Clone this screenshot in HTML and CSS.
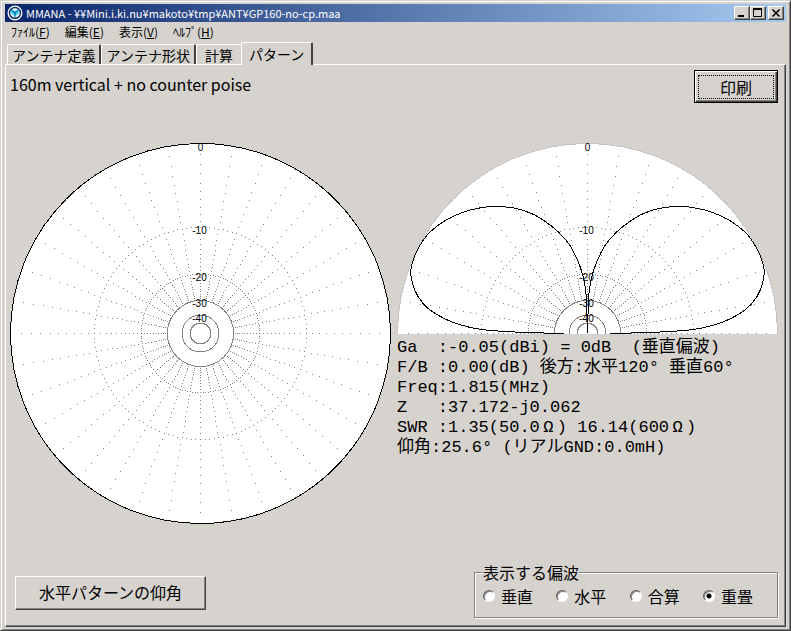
FILE: index.html
```html
<!DOCTYPE html>
<html lang="ja">
<head>
  <meta charset="UTF-8">
  <meta name="viewport" content="width=device-width, initial-scale=1.0">
  <title>MMANA</title>
  <link rel="stylesheet" href="styles.css">
</head>
<body>
  <div class="window">
    <header class="titlebar">
      <svg class="app-icon" viewBox="0 0 16 16" aria-hidden="true">
        <circle cx="8" cy="8" r="7.5" fill="#fff"/>
        <circle cx="8" cy="8" r="5.5" fill="#e8f8ff" stroke="#103060" stroke-width="1.5"/>
        <path d="M3.5 4.5L8 6l4.500-1.500L11 9 8 11 5 9z" fill="#20c8f0"/>
        <path d="M4 4l4 4 4-4M8 8v5" fill="none" stroke="#1060a0"/>
      </svg>
      <h1>MMANA - ¥¥Mini.i.ki.nu¥makoto¥tmp¥ANT¥GP160-no-cp.maa</h1>
      <div class="controls">
        <button type="button" aria-label="最小化"><svg viewBox="0 0 12 10"><path d="M2 8h6" stroke="#000" stroke-width="2"/></svg></button>
        <button type="button" aria-label="最大化"><svg viewBox="0 0 12 10"><path d="M1.500 1v7.500h8V1M1 1h9" fill="none" stroke="#000"/><path d="M1 1h9" stroke="#000" stroke-width="2"/></svg></button>
        <button type="button" class="close" aria-label="閉じる"><svg viewBox="0 0 12 10"><path d="M2.500 1.500l7 7M9.500 1.500l-7 7" stroke="#000" stroke-width="1.600"/></svg></button>
      </div>
    </header>

    <nav class="menu">
      <button type="button">ﾌｧｲﾙ(<u>F</u>)</button>
      <button type="button">編集(<u>E</u>)</button>
      <button type="button">表示(<u>V</u>)</button>
      <button type="button">ﾍﾙﾌﾟ(<u>H</u>)</button>
    </nav>

    <div class="tabs" role="tablist">
      <button type="button" role="tab">アンテナ定義</button>
      <button type="button" role="tab">アンテナ形状</button>
      <button type="button" role="tab">計算</button>
      <button type="button" role="tab" class="active" aria-selected="true">パターン</button>
    </div>

    <main class="panel">
      <div class="top">
        <p class="name">160m vertical + no counter poise</p>
        <button type="button" class="btn print"><span>印刷</span></button>
      </div>

      <div class="charts">
        <svg id="horizontal" class="plot" viewBox="0 0 381 381" role="img" aria-label="水平パターン"></svg>
        <div>
          <svg id="vertical" class="plot" viewBox="0 0 381 191" role="img" aria-label="垂直パターン"></svg>
          <pre class="info">Ga  :-0.05(dBi) = 0dB  (垂直偏波)
F/B :0.00(dB) 後方:水平120° 垂直60°
Freq:1.815(MHz)
Z   :37.172-j0.062
SWR :1.35(50.0<span class="wide">Ω</span>) 16.14(600<span class="wide">Ω</span>)
仰角:25.6° (リアルGND:0.0mH)</pre>
        </div>
      </div>

      <div class="bottom">
        <button type="button" class="btn elevation">水平パターンの仰角</button>
        <fieldset>
          <legend>表示する偏波</legend>
          <label><input type="radio" name="pol" value="v">垂直</label>
          <label><input type="radio" name="pol" value="h">水平</label>
          <label><input type="radio" name="pol" value="sum">合算</label>
          <label><input type="radio" name="pol" value="both" checked>重畳</label>
        </fieldset>
      </div>
    </main>
  </div>
  <script src="plot.js"></script>
</body>
</html>
```
FILE: styles.css
```css
* {
  box-sizing: border-box;
}

body {
  margin: 0;
  font-family: "Noto Sans CJK JP", sans-serif;
  font-size: 16px;
  color: #000;
  background-color: #d6d3ce;
}

button, input {
  font: inherit;
  color: inherit;
  margin: 0;
}

.window {
  min-height: 100vh;
  display: flex;
  flex-direction: column;
  padding: 3px 4px 3px 4px;
  border: 1px solid;
  border-color: #d6d3ce #424142 #424142 #d6d3ce;
  box-shadow: inset 1px 1px #fff, inset -1px -1px #848284;
}

.titlebar {
  display: flex;
  align-items: center;
  height: 18px;
  padding: 0 2px;
  background: linear-gradient(to right, #0a246a, #a6caf0);
  color: #fff;
}

.app-icon {
  width: 16px;
  height: 16px;
  margin-right: 3px;
}

.titlebar h1 {
  flex: 1;
  margin: 0;
  font-size: 11px;
  font-weight: normal;
  line-height: 16px;
  white-space: nowrap;
  overflow: hidden;
}

.controls {
  display: flex;
}

.controls button {
  width: 16px;
  height: 14px;
  padding: 1px;
  background-color: #d6d3ce;
  border: 1px solid;
  border-color: #fff #424142 #424142 #fff;
  box-shadow: inset -1px -1px #848284;
}

.controls svg {
  display: block;
  width: 12px;
  height: 10px;
}

.controls .close {
  margin-left: 2px;
}

.menu {
  display: flex;
  gap: 15px;
  padding: 0 6px;
  height: 20px;
}

.menu button {
  padding: 0;
  border: 0;
  background: none;
  font-size: 12px;
  line-height: 16px;
  white-space: nowrap;
}

.tabs {
  display: flex;
  align-items: flex-end;
  padding-left: 2px;
  height: 22px;
}

.tabs button {
  height: 20px;
  padding: 0 4px;
  background-color: #d6d3ce;
  border: 1px solid #fff;
  border-right: 2px solid #424142;
  border-bottom: 0;
  border-radius: 2px 2px 0 0;
  font-size: 14px;
  line-height: 18px;
  white-space: nowrap;
}

.tabs button:nth-child(3) {
  padding: 0 8px;
  border-right: 0;
}

.tabs .active {
  position: relative;
  height: 23px;
  margin-bottom: -1px;
  padding: 0 7px;
  line-height: 18px;
}

.panel {
  flex: 1;
  display: flex;
  flex-direction: column;
  padding: 5px 7px 8px 4px;
  border: 1px solid;
  border-color: #fff #424142 #424142 #fff;
  box-shadow: inset -1px -1px #848284;
}

.top {
  display: flex;
  justify-content: space-between;
  align-items: flex-start;
}

.name {
  margin: 4px 0 0;
  font-size: 16px;
  line-height: 20px;
}

.btn {
  background-color: #d6d3ce;
  border: 1px solid;
  border-color: #fff #424142 #424142 #fff;
  box-shadow: inset -1px -1px #848284;
  line-height: 22px;
  white-space: nowrap;
}

.print {
  width: 84px;
  height: 33px;
  padding: 2px;
  border-color: #000;
  box-shadow: inset 1px 1px #fff, inset -1px -1px #424142, inset -2px -2px #848284;
}

.print span {
  display: block;
  margin: 1px;
  border: 1px dotted #000;
}

.charts {
  display: grid;
  grid-template-columns: 1fr 1fr;
  gap: 6px;
  margin-top: 40px;
}

.plot {
  display: block;
  width: 100%;
}

.plot text {
  font-family: "Liberation Sans", Arial, sans-serif;
  font-size: 10px;
  text-anchor: middle;
}

.plot path, .plot circle {
  fill: none;
  shape-rendering: crispEdges;
}

.plot .area {
  fill: #fff;
}

.plot .dots {
  fill: #848284;
}

.plot .ring {
  stroke: #848284;
}

.plot .edge {
  stroke: #c6c3c6;
}

.plot .pattern {
  stroke: #000;
}

.info {
  margin: 4px 0 0;
  font-family: "Liberation Mono", "Noto Sans CJK JP", monospace;
  font-size: 17px;
  line-height: 20px;
}

.wide {
  display: inline-block;
  width: 1em;
  text-align: center;
}

.bottom {
  display: flex;
  justify-content: space-between;
  align-items: flex-end;
  margin-top: auto;
}

.elevation {
  width: 191px;
  height: 34px;
  padding: 0 0 3px;
  margin: 0 0 8px 5px;
}

fieldset {
  display: flex;
  justify-content: space-between;
  width: 304px;
  margin: 0;
  padding: 0 24px 6px 8px;
  border: 1px solid #848284;
  box-shadow: 1px 1px #fff, inset 1px 1px #fff;
}

legend {
  padding: 0;
  line-height: 18px;
  background-color: #d6d3ce;
}

fieldset label {
  display: flex;
  align-items: center;
  gap: 6px;
  line-height: 30px;
}

input[type="radio"] {
  appearance: none;
  width: 12px;
  height: 12px;
  border: 1px solid;
  border-color: #636163 #fff #fff #636163;
  border-radius: 50%;
  background-color: #fff;
  box-shadow: inset 1px 1px #848284;
}

input[type="radio"]:checked {
  background-image: radial-gradient(circle, #000 2px, transparent 3px);
}
```
FILE: plot.js
```javascript
const R = 190;
const C = 190.5;

// log scale: 0.89 per 2 dB
const radius = db => R * Math.pow(0.89, db / 2);

// right hand lobe, x / y from the centre
const lobe = [
  [23, 0], [69, 1.3], [106, 4], [126, 8.3], [142.7, 14.7], [159.3, 25],
  [169.3, 36.7], [175, 50], [176.7, 63.3], [173, 77], [167, 89],
  [158, 101], [142.7, 112.7], [126, 120.7], [109.3, 125.3], [92.7, 127],
  [72.7, 125.3], [56, 120], [42.7, 112.3], [29.3, 101.7], [17.7, 88.3],
  [9.3, 71.7], [4.7, 58.3], [2.3, 46.7], [1, 33], [0, 0]
];

function add(svg, name, attrs, text) {
  const el = document.createElementNS('http://www.w3.org/2000/svg', name);
  for (const key in attrs) el.setAttribute(key, attrs[key]);
  if (text) el.textContent = text;
  svg.appendChild(el);
}

function dot(r, deg) {
  const a = deg * Math.PI / 180;
  const x = Math.floor(C + r * Math.cos(a));
  const y = Math.floor(C - r * Math.sin(a));
  return `M${x} ${y}h1v1h-1z`;
}

function grid(svg, span) {
  let d = '';
  for (let deg = 0; deg <= span; deg += 10) {
    for (let db = 1; db < 30; db++) d += dot(radius(db), deg);
  }
  for (let deg = 0; deg <= span; deg += 2.5) {
    d += dot(radius(10), deg) + dot(radius(20), deg);
  }
  add(svg, 'path', { class: 'dots', d });
  [30, 40, 50].forEach(db => {
    add(svg, 'circle', { class: 'ring', cx: C, cy: C, r: radius(db) });
  });
}

function labels(svg) {
  [0, 10, 20, 30, 40].forEach(db => {
    const y = Math.round(C - radius(db)) + 7;
    add(svg, 'text', { x: C - (db ? 1 : 0), y }, db ? '-' + db : '0');
  });
}

// smooth curve through the points
function curve(points, side) {
  const p = points.map(([x, y]) => [C + side * x, C - y]);
  let d = `M${p[0]}`;
  for (let i = 0; i < p.length - 1; i++) {
    const a = p[i - 1] || p[i], b = p[i], c = p[i + 1], e = p[i + 2] || c;
    d += `C${b[0] + (c[0] - a[0]) / 6},${b[1] + (c[1] - a[1]) / 6}`
      + ` ${c[0] - (e[0] - b[0]) / 6},${c[1] - (e[1] - b[1]) / 6} ${c[0]},${c[1]}`;
  }
  return d;
}

const horizontal = document.getElementById('horizontal');
add(horizontal, 'circle', { class: 'area', cx: C, cy: C, r: R });
grid(horizontal, 359);
add(horizontal, 'circle', { class: 'pattern', cx: C, cy: C, r: R });
labels(horizontal);

const vertical = document.getElementById('vertical');
add(vertical, 'circle', { class: 'area edge', cx: C, cy: C, r: R });
grid(vertical, 180);
add(vertical, 'path', { class: 'pattern', d: curve(lobe, 1) });
add(vertical, 'path', { class: 'pattern', d: curve(lobe, -1) });
labels(vertical);
```
